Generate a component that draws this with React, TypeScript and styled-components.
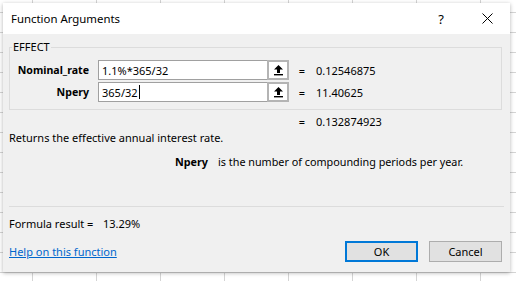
import * as React from 'react'
import styled, { createGlobalStyle } from 'styled-components'

const GlobalStyle = createGlobalStyle`
  html, body { margin: 0; padding: 0; }
  body {
    width: 516px;
    height: 281px;
    overflow: hidden;
    background-color: #fff;
    background-image:
      linear-gradient(to right, #d4d4d4 1px, transparent 1px),
      linear-gradient(to bottom, #d4d4d4 1px, transparent 1px);
    background-size: 64px 20px, 64px 20px;
    background-position: 32px 12px, 32px 12px;
    font-family: "Noto Sans", "Open Sans", sans-serif;
    color: #000;
  }
`

const Screen = styled.div`
  padding: 3px 6px 0 3px;
`

const Dialog = styled.div`
  width: 507px;
  height: 269px;
  display: flex;
  flex-direction: column;
  background: #f0f0f0;
  box-shadow: 0 1px 4px rgba(0, 0, 0, 0.3);
  font-size: 11px;
`

const TitleBar = styled.div`
  height: 31px;
  flex: none;
  display: flex;
  align-items: center;
  background: #fff;
  padding-left: 8px;
`

const Title = styled.div`
  flex: 1;
  font-size: 11.4px;
`

const TitleButton = styled.div<{ $w: number }>`
  width: ${p => p.$w}px;
  height: 31px;
  display: flex;
  align-items: center;
  justify-content: center;
  font-size: 13px;
`

const Body = styled.div`
  flex: 1;
  display: flex;
  flex-direction: column;
  padding: 0 6px;
`

const Group = styled.fieldset`
  margin: 7px 2px 0 0;
  padding: 7px 0 7px 0;
  border: 1px solid #dcdcdc;
  display: flex;
  flex-direction: column;
  gap: 2px;
  min-width: 0;
`

const Legend = styled.legend`
  padding: 0 1px;
  margin-left: 2px;
  font-size: 11px;
  line-height: 12px;
`

const ArgRow = styled.div`
  display: grid;
  grid-template-columns: 88px 169px 22px 16px 1fr;
  align-items: center;
  height: 20px;
`

const ArgLabel = styled.div`
  font-weight: bold;
  text-align: right;
  padding-right: 9px;
  font-size: 10.6px;
`

const ArgInput = styled.div`
  height: 18px;
  background: #fff;
  border: 1px solid #a0a0a0;
  border-right: none;
  display: flex;
  align-items: center;
  padding-left: 3px;
  font-size: 11px;
`

const Caret = styled.span`
  display: inline-block;
  width: 1px;
  height: 14px;
  background: #000;
  margin-left: 1px;
`

const PickButton = styled.div`
  height: 20px;
  box-sizing: border-box;
  border: 2px solid #b4b4b4;
  background: #fff;
  display: flex;
  align-items: center;
  justify-content: center;
`

const Eq = styled.div`
  grid-column: 4;
  text-align: right;
`

const Value = styled.div`
  padding-left: 11px;
`

const ResultRow = styled(ArgRow)`
  margin-top: 1px;
  padding-left: 1px;
`

const Desc = styled.div`
  margin-top: -1px;
`

const ArgDesc = styled.div`
  margin-top: 9px;
  padding-left: 166px;
  display: flex;
  gap: 10px;
  font-size: 10.8px;
`

const Bold = styled.span`
  font-weight: bold;
`

const Separator = styled.div`
  margin-top: auto;
  height: 1px;
  background: #dcdcdc;
`

const FormulaResult = styled.div`
  margin-top: 9px;
  display: flex;
`

const ResultLabel = styled.span`
  width: 94px;
`

const Footer = styled.div`
  display: flex;
  align-items: center;
  margin: 10px 2px 10px 0;
`

const HelpLink = styled.a`
  flex: 1;
  color: #0066cc;
  text-decoration: underline;
  font-size: 11px;
`

const Button = styled.div<{ $default?: boolean }>`
  width: 73px;
  height: 21px;
  box-sizing: border-box;
  display: flex;
  align-items: center;
  justify-content: center;
  background: #e1e1e1;
  border: ${p => (p.$default ? '2px solid #0078d7' : '1px solid #adadad')};
  font-size: 11px;
  & + & {
    margin-left: 11px;
  }
`

const UpArrow = () => (
  <svg width="11" height="12" viewBox="0 0 11 12">
    <path d="M5.5 1 L1 5.5 H4 V9 H7 V5.5 H10 Z" fill="#000" />
    <rect x="1" y="10" width="9" height="1.4" fill="#000" />
  </svg>
)

const CloseIcon = () => (
  <svg width="11" height="11" viewBox="0 0 11 11">
    <path d="M0.5 0.5 L10.5 10.5 M10.5 0.5 L0.5 10.5" stroke="#000" strokeWidth="1" />
  </svg>
)

type Arg = { name: string; text: string; value: string; caret?: boolean }

const args: Arg[] = [
  { name: 'Nominal_rate', text: '1.1%*365/32', value: '0.12546875' },
  { name: 'Npery', text: '365/32', value: '11.40625', caret: true },
]

const App = () => (
  <>
    <GlobalStyle />
    <Screen>
      <Dialog>
        <TitleBar>
          <Title>Function Arguments</Title>
          <TitleButton $w={46}>?</TitleButton>
          <TitleButton $w={46}><CloseIcon /></TitleButton>
        </TitleBar>
        <Body>
          <Group>
            <Legend>EFFECT</Legend>
            {args.map(a => (
              <ArgRow key={a.name}>
                <ArgLabel>{a.name}</ArgLabel>
                <ArgInput>
                  {a.text}
                  {a.caret && <Caret />}
                </ArgInput>
                <PickButton><UpArrow /></PickButton>
                <Eq>=</Eq>
                <Value>{a.value}</Value>
              </ArgRow>
            ))}
          </Group>
          <ResultRow>
            <Eq>=</Eq>
            <Value>0.132874923</Value>
          </ResultRow>
          <Desc>Returns the effective annual interest rate.</Desc>
          <ArgDesc>
            <Bold>Npery</Bold>
            <span>is the number of compounding periods per year.</span>
          </ArgDesc>
          <Separator />
          <FormulaResult>
            <ResultLabel>Formula result =</ResultLabel>
            <span>13.29%</span>
          </FormulaResult>
          <Footer>
            <HelpLink>Help on this function</HelpLink>
            <Button $default>OK</Button>
            <Button>Cancel</Button>
          </Footer>
        </Body>
      </Dialog>
    </Screen>
  </>
)

export default App
